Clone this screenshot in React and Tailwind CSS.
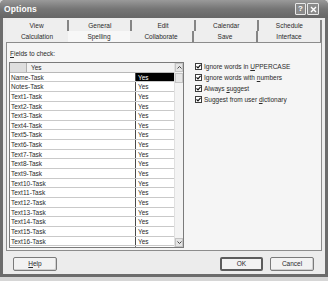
const fields = [
  'Name-Task', 'Notes-Task',
  'Text1-Task', 'Text2-Task', 'Text3-Task', 'Text4-Task', 'Text5-Task', 'Text6-Task',
  'Text7-Task', 'Text8-Task', 'Text9-Task', 'Text10-Task', 'Text11-Task', 'Text12-Task',
  'Text13-Task', 'Text14-Task', 'Text15-Task', 'Text16-Task',
];

const topTabs = ['View', 'General', 'Edit', 'Calendar', 'Schedule'];
const bottomTabs = ['Calculation', 'Spelling', 'Collaborate', 'Save', 'Interface'];

const options = [
  ['Ignore words in ', 'U', 'PPERCASE'],
  ['Ignore words with ', 'n', 'umbers'],
  ['Always ', 's', 'uggest'],
  ['Suggest from user ', 'd', 'ictionary'],
];

const Check = () => (
  <div className="w-[7px] h-[7px] bg-white border border-[#3c3c3c] flex items-center justify-center">
    <svg width="5" height="5" viewBox="0 0 5 5">
      <path d="M0.5 2.3 L2 3.9 L4.6 0.8" stroke="#111" strokeWidth="1.2" fill="none" />
    </svg>
  </div>
);

const Arrow = ({ down }) => (
  <div className="h-[9px] bg-[#e4e4e4] border border-[#c4c4c4] flex items-center justify-center">
    <svg width="5" height="3" viewBox="0 0 5 3">
      <path d={down ? 'M0.5 0.5 L2.5 2.5 L4.5 0.5' : 'M0.5 2.5 L2.5 0.5 L4.5 2.5'} stroke="#444" strokeWidth="1" fill="none" />
    </svg>
  </div>
);

export default function App() {
  return (
    <div className="w-[328px] h-[281px] bg-[#d6d6d6] overflow-hidden font-['Liberation_Sans',Arial,sans-serif] text-[6.5px] text-[#2a2a2a]">
      <div className="h-[277px] flex flex-col bg-[#6c6c6c] rounded-t-[5px] px-[3px] pb-[3px]">
        {/* title bar */}
        <div className="h-[18px] -mx-[3px] px-[4px] flex items-center rounded-t-[5px] bg-gradient-to-b from-[#9a9a9a] via-[#757575] to-[#666666]">
          <span className="text-[8.5px] font-bold text-white tracking-[0.1px]">Options</span>
          <div className="ml-auto flex gap-[1px] mr-[5px]">
            <div className="w-[11px] h-[12px] border border-[#e8e8e8] rounded-[1px] bg-[#8a8a8a] flex items-center justify-center text-white text-[8px] font-bold leading-none">?</div>
            <div className="w-[12px] h-[12px] border border-[#e8e8e8] rounded-[1px] bg-[#8a8a8a] flex items-center justify-center">
              <svg width="7" height="7" viewBox="0 0 7 7">
                <path d="M1 1 L6 6 M6 1 L1 6" stroke="#fff" strokeWidth="1.4" />
              </svg>
            </div>
          </div>
        </div>

        {/* body */}
        <div className="flex-1 bg-[#ececec] flex flex-col pt-[2px] px-[3px]">
          {/* tabs */}
          <div className="flex w-[316px] h-[11px]">
            {topTabs.map((t) => (
              <div key={t} className="flex-1 flex items-center justify-center border-r-2 border-[#858585] bg-[#eeeeee]">
                {t}
              </div>
            ))}
          </div>
          <div className="flex w-[316px] h-[11px]">
            {bottomTabs.map((t, i) => (
              <div
                key={t}
                className={
                  'flex-1 flex items-center justify-center ' +
                  (i === 0 ? 'bg-[#eeeeee]' : i === 1 ? 'bg-[#f7f7f7]' : 'border-r-2 border-[#858585] bg-[#eeeeee]')
                }
              >
                {t}
              </div>
            ))}
          </div>

          {/* panel */}
          <div className="w-[316px] h-[209px] border border-[#8c8c8c] bg-[#f5f5f5] flex pt-[6px] pl-[2px]">
            <div className="flex flex-col w-[175px]">
              <div className="h-[9px] leading-[9px] pl-[1px]">
                <span className="underline">F</span>ields to check:
              </div>
              <div className="mt-[4px] h-[186px] border border-[#7a7a7a] bg-white flex overflow-hidden">
                <div className="w-[164px] flex flex-col">
                  <div className="h-[9.65px] flex border-b border-[#b8b8b8] bg-[#f2f2f2]">
                    <div className="w-[17px] bg-[#dedede] border-r border-[#b0b0b0]"></div>
                    <div className="pl-[4px] leading-[9px]">Yes</div>
                  </div>
                  {fields.map((f, i) => (
                    <div key={f} className="h-[9.65px] shrink-0 flex border-b border-[#c9c9c9]">
                      <div className="w-[125px] pl-[1px] leading-[9px]">{f}</div>
                      <div
                        className={
                          'flex-1 border-l border-[#4a4a4a] pl-[2px] leading-[9px] ' +
                          (i === 0 ? 'bg-black text-white' : '')
                        }
                      >
                        Yes
                      </div>
                    </div>
                  ))}
                  <div className="h-[3px] flex">
                    <div className="w-[125px]"></div>
                    <div className="flex-1 border-l border-dotted border-[#777]"></div>
                  </div>
                </div>
                <div className="w-[9px] ml-auto flex flex-col bg-[#f3f3f3] border-l border-[#e0e0e0]">
                  <Arrow />
                  <div className="h-[10px] mt-[1px] bg-[#e6e6e6] border border-[#c4c4c4]"></div>
                  <div className="flex-1"></div>
                  <Arrow down />
                </div>
              </div>
            </div>

            <div className="ml-[11px] mt-[12px] flex flex-col">
              {options.map((o) => (
                <div key={o[0]} className="h-[11px] flex items-center gap-[2px]">
                  <Check />
                  <span>
                    {o[0]}
                    <span className="underline">{o[1]}</span>
                    {o[2]}
                  </span>
                </div>
              ))}
            </div>
          </div>

          {/* buttons */}
          <div className="flex items-center mt-[6px] pl-[7px] pr-[8px]">
            <button className="w-[44px] h-[14px] border border-[#7a7a7a] rounded-[2px] bg-[#f2f2f2] shadow-[inset_-1px_-1px_0_#cfcfcf]">
              <span className="underline">H</span>elp
            </button>
            <button className="ml-auto w-[43px] h-[14px] border-2 border-[#5c5c5c] rounded-[2px] bg-[#f2f2f2]">
              OK
            </button>
            <button className="ml-[7px] w-[44px] h-[14px] border border-[#7a7a7a] rounded-[2px] bg-[#f2f2f2] shadow-[inset_-1px_-1px_0_#cfcfcf]">
              Cancel
            </button>
          </div>
        </div>
      </div>
    </div>
  );
}
